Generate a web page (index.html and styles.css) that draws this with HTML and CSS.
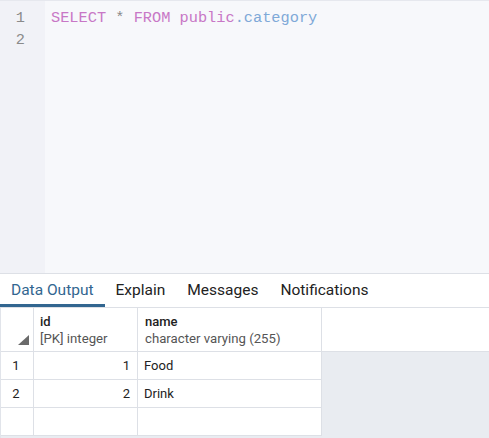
FILE: index.html
```html
<!DOCTYPE html>
<html>
<head>
<meta charset="utf-8">
<link rel="stylesheet" href="styles.css">
</head>
<body>
<div class="app">
  <div class="editor">
    <div class="gutter">
      <div class="ln">1</div>
      <div class="ln">2</div>
    </div>
    <div class="code">
      <div class="line"><span class="kw">SELECT</span> <span class="op">*</span> <span class="kw">FROM</span> <span class="kw">public</span><span class="id">.category</span></div>
      <div class="line"></div>
    </div>
  </div>
  <div class="tabs">
    <div class="tab active">Data Output</div>
    <div class="tab">Explain</div>
    <div class="tab">Messages</div>
    <div class="tab">Notifications</div>
  </div>
  <div class="grid">
    <div class="head">
      <div class="cell rn"><span class="tri"></span></div>
      <div class="cell c-id"><div class="title">id</div><div class="type">[PK] integer</div></div>
      <div class="cell c-name"><div class="title">name</div><div class="type">character varying (255)</div></div>
    </div>
    <div class="row">
      <div class="cell rn">1</div>
      <div class="cell c-id num">1</div>
      <div class="cell c-name">Food</div>
    </div>
    <div class="row">
      <div class="cell rn">2</div>
      <div class="cell c-id num">2</div>
      <div class="cell c-name">Drink</div>
    </div>
    <div class="row">
      <div class="cell rn"></div>
      <div class="cell c-id num"></div>
      <div class="cell c-name"></div>
    </div>
  </div>
</div>
</body>
</html>
```
FILE: styles.css
```css
html, body {
  margin: 0;
  padding: 0;
}
body {
  width: 489px;
  height: 438px;
  overflow: hidden;
  font-family: Roboto, "Liberation Sans", sans-serif;
  background: #fff;
}
.app {
  display: flex;
  flex-direction: column;
  height: 438px;
}
.editor {
  height: 273px;
  display: flex;
  background: #f7f8fb;
  border-top: 1px solid #e6e8ee;
  box-sizing: border-box;
}
.gutter {
  width: 45px;
  background: #f1f2f7;
  padding-top: 6px;
  box-sizing: border-box;
}
.ln {
  height: 22px;
  line-height: 22px;
  text-align: right;
  padding-right: 20px;
  font-family: "Liberation Mono", monospace;
  font-size: 15.3px;
  color: #8a8a8a;
}
.code {
  flex: 1;
  padding-top: 6px;
  padding-left: 6px;
}
.line {
  height: 22px;
  line-height: 22px;
  font-family: "Liberation Mono", monospace;
  font-size: 15.3px;
  white-space: pre;
}
.kw { color: #c877c6; }
.op { color: #8a8a8a; }
.id { color: #7fa9d8; }
.tabs {
  display: flex;
  height: 35px;
  border-top: 1px solid #dde0e6;
  border-bottom: 1px solid #dde0e6;
  box-sizing: border-box;
  background: #fff;
}
.tab {
  padding: 1px 11px 0;
  font-size: 15.5px;
  line-height: 31px;
  color: #222;
  border-bottom: 3px solid transparent;
}
.tab.active {
  color: #326690;
  border-bottom-color: #326690;
}
.grid {
  flex: 1;
  background: #e9ecf1;
  border-left: 1px solid #e1e4ea;
  display: flex;
  flex-direction: column;
}
.head {
  display: flex;
  height: 44px;
  background: #fff;
  border-bottom: 1px solid #dde0e6;
  box-sizing: border-box;
}
.row {
  display: flex;
  width: 321px;
  height: 27px;
  background: #fff;
  border-bottom: 1px solid #dde0e6;
  box-sizing: content-box;
}
.row:first-of-type { height: 28px; }
.cell {
  border-right: 1px solid #dde0e6;
  box-sizing: border-box;
  font-size: 13px;
  color: #222;
}
.rn {
  width: 33px;
  text-align: center;
  position: relative;
}
.c-id { width: 104px; }
.c-name { width: 184px; }
.row .cell {
  line-height: 27px;
}
.row .rn { padding-right: 2px; }
.row .c-name { padding-left: 6px; }
.num {
  text-align: right;
  padding-right: 7px;
}
.head .c-id, .head .c-name {
  padding: 5px 7px 0;
}
.head .c-id { padding-left: 6px; }
.title {
  font-weight: 500;
  font-size: 13px;
  line-height: 17px;
  color: #222;
}
.type {
  font-size: 13.2px;
  line-height: 17px;
  color: #555;
}
.tri {
  position: absolute;
  right: 4px;
  bottom: 6px;
  width: 0;
  height: 0;
  border-left: 11px solid transparent;
  border-bottom: 10px solid #6a6a6a;
}
```
